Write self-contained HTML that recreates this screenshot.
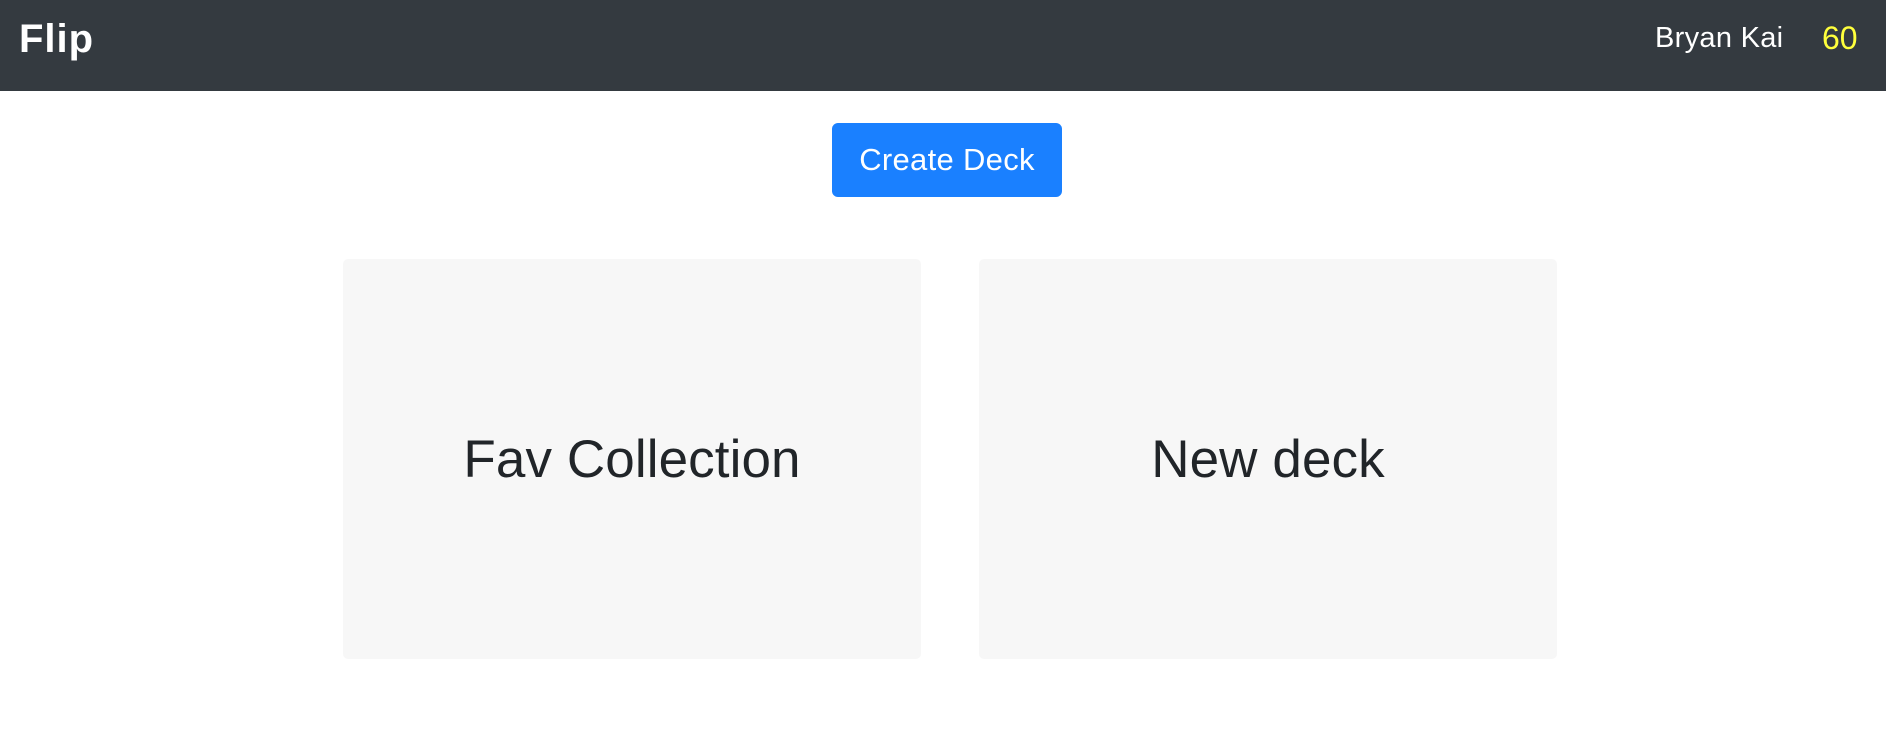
<!DOCTYPE html>
<html><head><style>
*{margin:0;padding:0;box-sizing:border-box}
body{width:1886px;height:742px;background:#fff;font-family:"Liberation Sans",sans-serif;position:relative;overflow:hidden}
.nav{position:absolute;left:0;top:0;width:1886px;height:91px;background:#343a40}
.logo{position:absolute;left:19px;top:17px;color:#fff;font-size:40px;font-weight:bold;letter-spacing:1px}
.user{position:absolute;left:1655px;top:22px;color:#fff;font-size:29px;letter-spacing:0.3px}
.pts{position:absolute;left:1822px;top:20px;color:#ffff3c;font-size:32px}
.btn{position:absolute;left:832px;top:123px;width:230px;height:74px;background:#1a80ff;border-radius:6px;color:#fff;font-size:31px;text-align:center;line-height:74px;letter-spacing:0.3px}
.card{position:absolute;top:259px;width:578px;height:400px;background:#f7f7f7;border-radius:5px;color:#212529;font-size:53px;text-align:center;line-height:402px;letter-spacing:0.1px}
</style></head><body>
<div class="nav"><div class="logo">Flip</div><div class="user">Bryan Kai</div><div class="pts">60</div></div>
<div class="btn">Create Deck</div>
<div class="card" style="left:343px">Fav Collection</div>
<div class="card" style="left:979px">New deck</div>
</body></html>
